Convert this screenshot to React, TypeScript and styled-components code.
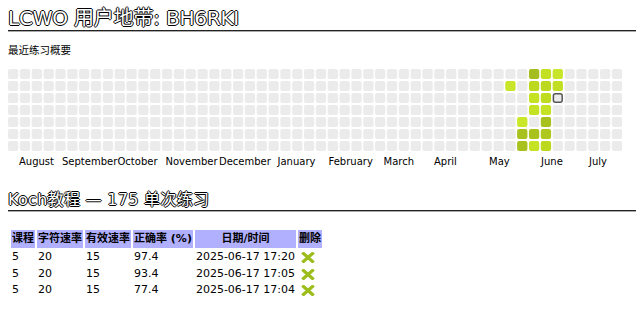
import React from "react";
import styled, { createGlobalStyle } from "styled-components";

const GlobalStyle = createGlobalStyle`
  body {
    margin: 0;
    background: #fff;
    color: #000;
    font-family: "DejaVu Sans", "Noto Sans CJK SC", sans-serif;
  }
`;

const Page = styled.div`
  padding: 0 4px 0 8px;
`;

const Heading = styled.h1<{ $size: number; $lh: number }>`
  margin: 0;
  font-size: ${(p) => p.$size}px;
  line-height: ${(p) => p.$lh}px;
  font-weight: normal;
  color: #fff;
  text-shadow: -1px 0 #000, 1px 0 #000, 0 -1px #000, 0 1px #000;
  border-bottom: 1px solid #222;
  box-shadow: 0 1px 0 #aaa;
`;

const Title = styled(Heading)`
  margin-top: 6px;
  letter-spacing: -0.2px;
`;

const SubTitle = styled(Heading)`
  margin-top: 21px;
  letter-spacing: 0.3px;
`;

const Note = styled.p`
  margin: 12px 0 0;
  font-size: 10.5px;
  line-height: 14px;
`;

const Chart = styled.svg`
  display: block;
  margin-top: 12px;
`;

const Table = styled.table`
  margin: 17px 0 0 1px;
  border-spacing: 2px;
  font-size: 11px;
`;

const Th = styled.th`
  background: #b0b0ff;
  padding: 1px;
  line-height: 16px;
  font-weight: bold;
  text-align: center;
`;

const Td = styled.td`
  padding: 1px;
  line-height: 12.7px;
  text-align: left;
`;

const DeleteIcon = styled.svg`
  display: block;
  margin-left: 2px;
`;

const COLS = 52;
const ROWS = 7;
const PITCH = 11.84;
const ROW_PITCH = 12;

// [col, row, colour]
const active: [number, number, string][] = [
  [44, 0, "#a6bd1f"],
  [45, 0, "#c3e022"],
  [46, 0, "#c9e52a"],
  [42, 1, "#c9e52a"],
  [44, 1, "#bcd81f"],
  [45, 1, "#bcd81f"],
  [46, 1, "#c2de22"],
  [44, 2, "#c5e224"],
  [45, 2, "#bfdc20"],
  [44, 3, "#c5e224"],
  [45, 3, "#c5e224"],
  [43, 4, "#cbe72a"],
  [45, 4, "#a9c11e"],
  [43, 5, "#a9c11e"],
  [44, 5, "#aac21e"],
  [45, 5, "#afc81f"],
  [43, 6, "#a9c11e"],
  [44, 6, "#c5e224"],
  [45, 6, "#bcd81f"],
];

const months: [string, number][] = [
  ["August", 11],
  ["September", 54],
  ["October", 109.5],
  ["November", 157.5],
  ["December", 211],
  ["January", 269.5],
  ["February", 320.5],
  ["March", 375.5],
  ["April", 426],
  ["May", 481],
  ["June", 533],
  ["July", 581],
];

const Heatmap: React.FC = () => {
  const lookup = new Map(active.map(([c, r, col]) => [`${c}-${r}`, col]));
  const cells = [];
  for (let c = 0; c < COLS; c++) {
    for (let r = 0; r < ROWS; r++) {
      const isToday = c === 46 && r === 2;
      cells.push(
        <rect
          key={`${c}-${r}`}
          x={c * PITCH + (isToday ? 0.75 : 0)}
          y={r * ROW_PITCH + (isToday ? 0.75 : 0)}
          width={isToday ? 8.8 : 10.3}
          height={isToday ? 8.5 : 10}
          rx={2}
          fill={lookup.get(`${c}-${r}`) ?? "#ebebeb"}
          stroke={isToday ? "#555" : "none"}
          strokeWidth={isToday ? 1.5 : 0}
        />
      );
    }
  }
  return (
    <Chart width={616} height={100}>
      {cells}
      {months.map(([name, x]) => (
        <text
          key={name}
          x={x}
          y={95.5}
          fontSize={10}
          fontFamily='"DejaVu Sans", sans-serif'
          fill="#000"
        >
          {name}
        </text>
      ))}
    </Chart>
  );
};

const Cross: React.FC = () => (
  <DeleteIcon width={14} height={11} viewBox="0 0 14 11">
    <path
      d="M2.5 1.5 L11.5 9.5 M11.5 1.5 L2.5 9.5"
      stroke="#9cbd1c"
      strokeWidth={3.2}
      strokeLinecap="square"
    />
  </DeleteIcon>
);

const sessions = [
  { lesson: 5, char: 20, eff: 15, acc: "97.4", date: "2025-06-17 17:20" },
  { lesson: 5, char: 20, eff: 15, acc: "93.4", date: "2025-06-17 17:05" },
  { lesson: 5, char: 20, eff: 15, acc: "77.4", date: "2025-06-17 17:04" },
];

export default function App() {
  return (
    <Page>
      <GlobalStyle />
      <Title $size={20} $lh={24}>
        LCWO 用户地带: BH6RKI
      </Title>
      <Note>最近练习概要</Note>
      <Heatmap />
      <SubTitle $size={16} $lh={20}>
        Koch教程 — 175 单次练习
      </SubTitle>
      <Table>
        <thead>
          <tr>
            <Th>课程</Th>
            <Th>字符速率</Th>
            <Th>有效速率</Th>
            <Th>正确率 (%)</Th>
            <Th>日期/时间</Th>
            <Th>删除</Th>
          </tr>
        </thead>
        <tbody>
          {sessions.map((s) => (
            <tr key={s.date}>
              <Td>{s.lesson}</Td>
              <Td>{s.char}</Td>
              <Td>{s.eff}</Td>
              <Td>{s.acc}</Td>
              <Td>{s.date}</Td>
              <Td>
                <Cross />
              </Td>
            </tr>
          ))}
        </tbody>
      </Table>
    </Page>
  );
}
